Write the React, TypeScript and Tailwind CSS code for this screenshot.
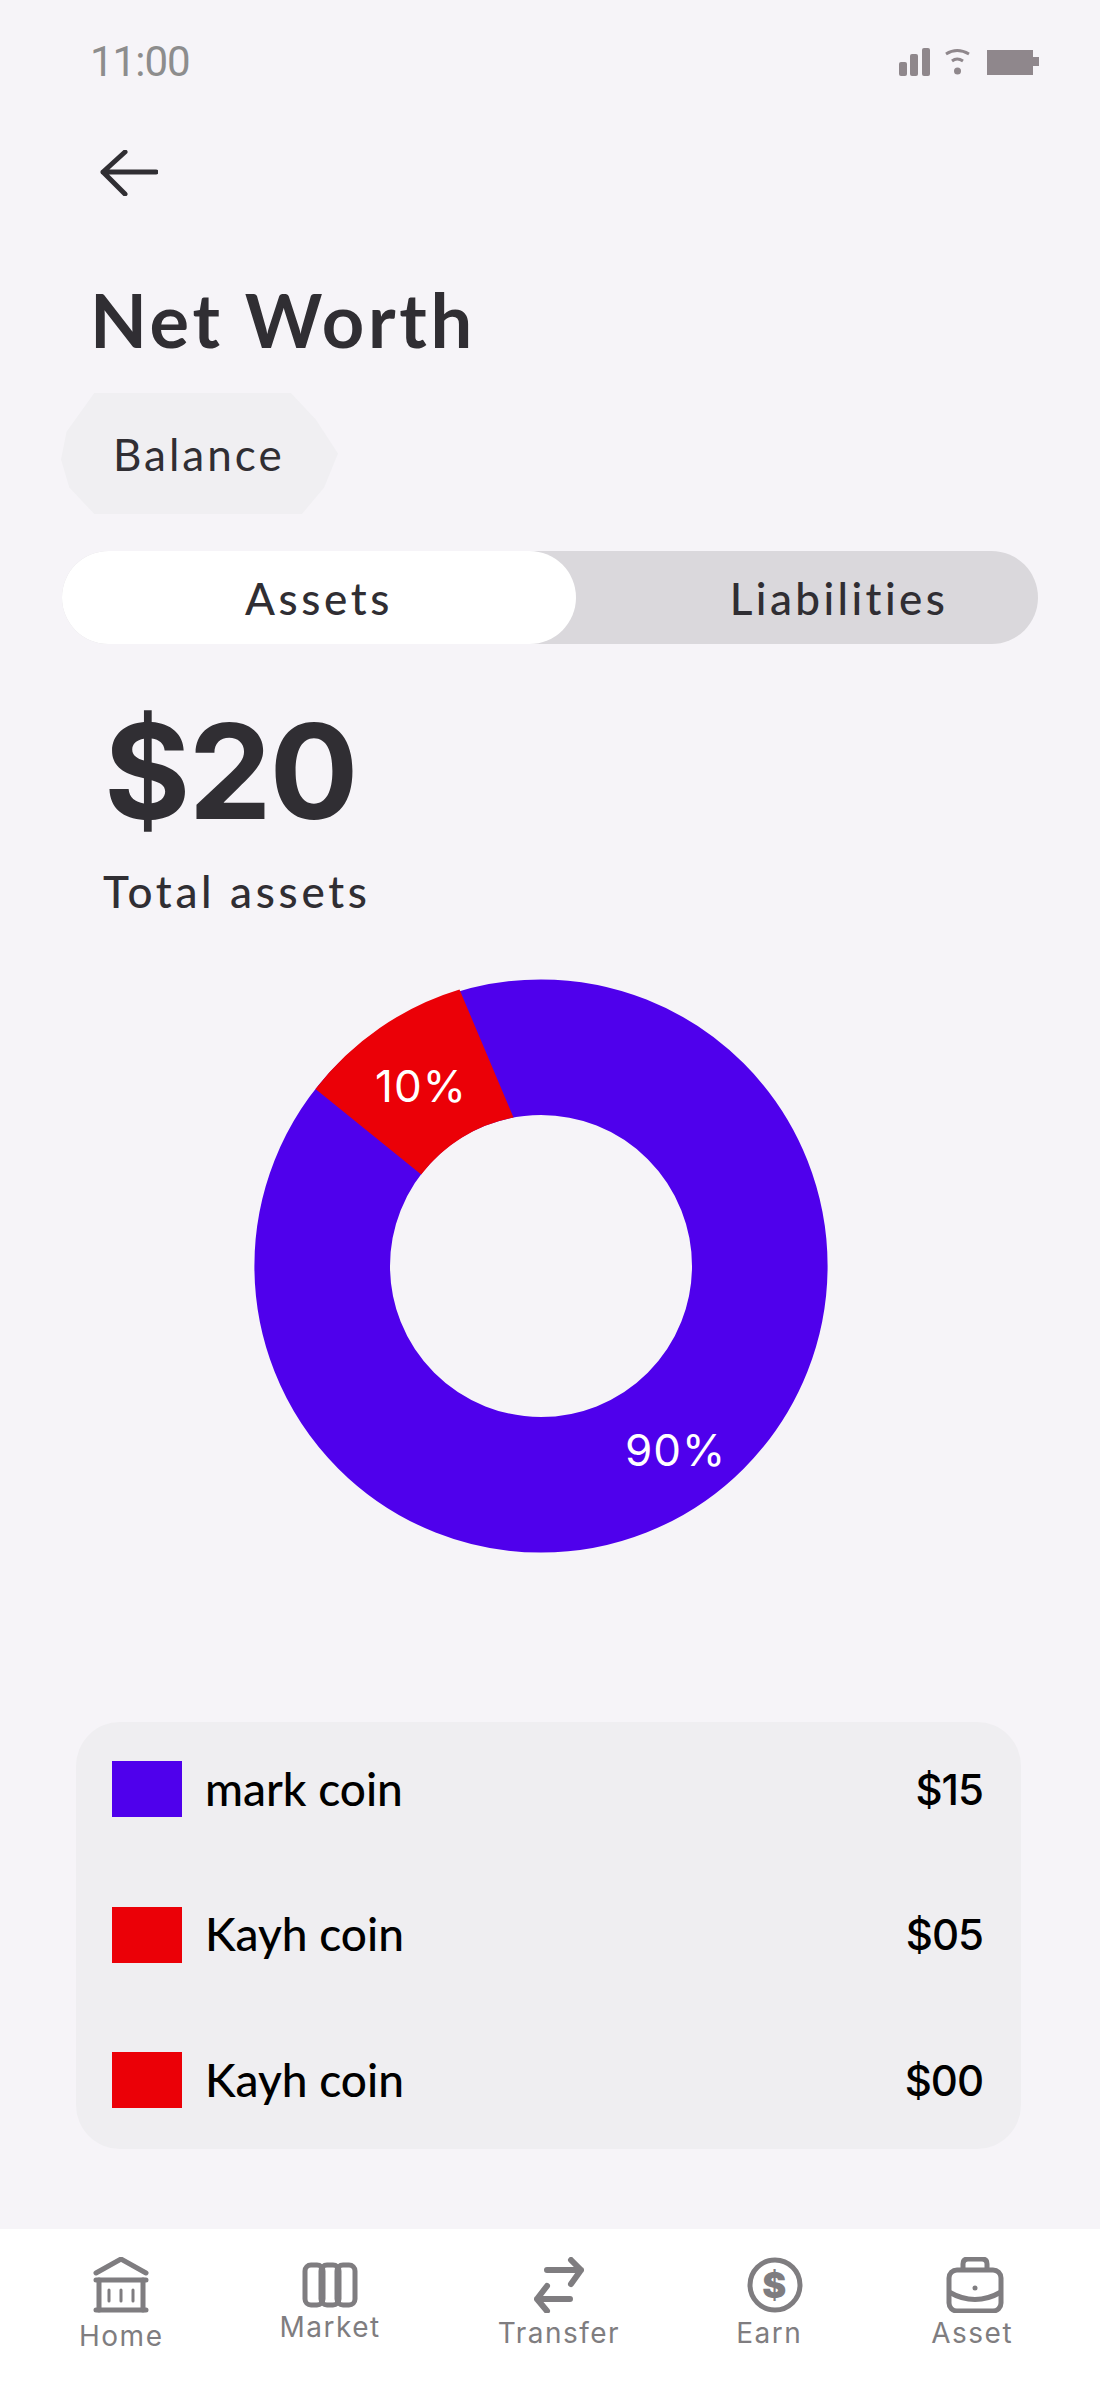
const rows = [
  { name: 'mark coin', amount: '$15', swatch: 'bg-[#4f00ec]' },
  { name: 'Kayh coin', amount: '$05', swatch: 'bg-[#eb0007]' },
  { name: 'Kayh coin', amount: '$00', swatch: 'bg-[#eb0007]' },
]

function StatusIcons() {
  return (
    <svg width="140" height="28" viewBox="0 0 140 28" fill="#8f878c">
      <rect x="0" y="14" width="8" height="14" rx="2" />
      <rect x="11" y="6" width="8" height="22" rx="2" />
      <rect x="23" y="0" width="8" height="28" rx="2" />
      <path d="M47 6 Q58 -1 70 6" fill="none" stroke="#8f878c" strokeWidth="3" />
      <path d="M53 13 Q58 9 64 13" fill="none" stroke="#8f878c" strokeWidth="3" />
      <circle cx="58.5" cy="23" r="3.5" />
      <rect x="88" y="2" width="46" height="25" />
      <rect x="134" y="9" width="6" height="9" />
    </svg>
  )
}

function Donut() {
  return (
    <svg width="586" height="586" viewBox="0 0 586 586">
      <circle cx="293" cy="293" r="218.8" fill="none" stroke="#4f00ec" strokeWidth="135.6" />
      <path d="M211.5 16.5 A286.6 286.6 0 0 0 67.5 116 L173.2 201.5 A151 151 0 0 1 265.5 144.6 Z" fill="#eb0007" />
      <text x="127" y="129" fill="#fff" fontSize="44" fontFamily="Inter, sans-serif" letterSpacing="1">10%</text>
      <text x="377" y="493" fill="#fff" fontSize="44" fontFamily="Inter, sans-serif" letterSpacing="1">90%</text>
    </svg>
  )
}

function HomeIcon() {
  return (
    <svg width="56" height="56" viewBox="0 0 56 56" fill="none" stroke="#7f7d80" strokeWidth="5" strokeLinecap="round" strokeLinejoin="round">
      <path d="M3 16 L28 2 L53 16" />
      <path d="M3 23 H53 M3 53 H53" />
      <path d="M6 23 V53 M50 23 V53" />
      <path d="M16 33 V44 M28 33 V44 M40 33 V44" strokeWidth="3" />
    </svg>
  )
}

function MarketIcon() {
  return (
    <svg width="56" height="46" viewBox="0 0 56 46" fill="none" stroke="#7f7d80" strokeWidth="5">
      <rect x="3" y="3" width="18" height="40" rx="6" />
      <rect x="19" y="3" width="18" height="40" rx="6" />
      <rect x="35" y="3" width="18" height="40" rx="6" />
    </svg>
  )
}

function TransferIcon() {
  return (
    <svg width="52" height="56" viewBox="0 0 52 56" fill="none" stroke="#7f7d80" strokeWidth="6" strokeLinecap="round" strokeLinejoin="round">
      <path d="M14 13 H48 M38 3 L48 13 L38 27" />
      <path d="M37 42 H4 M14 29 L4 42 L14 54" />
    </svg>
  )
}

function EarnIcon() {
  return (
    <svg width="56" height="56" viewBox="0 0 56 56" fill="none">
      <circle cx="28" cy="28" r="25" stroke="#7f7d80" strokeWidth="5" />
      <text x="28" y="41" textAnchor="middle" fill="#7f7d80" fontSize="36" fontWeight="900" fontFamily="Inter, sans-serif">$</text>
    </svg>
  )
}

function AssetIcon() {
  return (
    <svg width="58" height="56" viewBox="0 0 58 56" fill="none" stroke="#7f7d80" strokeWidth="5">
      <path d="M17 13 V7 Q17 2 22 2 H36 Q41 2 41 7 V13" />
      <rect x="3" y="13" width="52" height="41" rx="8" />
      <path d="M3 35 Q29 50 55 35" />
      <circle cx="29" cy="31" r="2.5" fill="#7f7d80" stroke="none" />
    </svg>
  )
}

export default function App() {
  return (
    <div className="w-[1100px] h-[2385px] bg-[#f6f4f8] flex flex-col overflow-hidden font-['Lato',sans-serif] text-[#302e33]">
      <div className="flex justify-between items-center pl-[90px] pr-[61px] pt-[40px] h-[84px]">
        <span className="text-[42px] leading-[46px] tracking-[-1px] text-[#8d8d8d] font-['Roboto',sans-serif]">11:00</span>
        <StatusIcons />
      </div>

      <div className="pl-[100px] mt-[66px] h-[46px]">
        <svg width="58" height="46" viewBox="0 0 58 46" fill="none" stroke="#302e33" strokeWidth="5" strokeLinecap="round" strokeLinejoin="round">
          <path d="M56 22 H3 M25 2 L3 22 L25 44" />
        </svg>
      </div>

      <h1 className="pl-[90px] mt-[82px] text-[74px] leading-[84px] font-bold tracking-[3.7px]">Net Worth</h1>

      <div className="ml-[61px] mt-[31px] w-[277px] h-[121px] flex items-center pl-[52px] bg-[#f0eff2] [clip-path:polygon(12%_0,83%_0,92%_22%,100%_50%,95%_78%,87%_100%,12%_100%,3%_78%,0_55%,2%_32%)]">
        <span className="text-[44px] tracking-[3px]">Balance</span>
      </div>

      <div className="ml-[62px] mt-[37px] w-[976px] h-[93px] flex rounded-full bg-[#dad8dc]">
        <div className="w-[514px] rounded-full bg-white flex items-center justify-center text-[44px] font-medium tracking-[3.6px]">Assets</div>
        <div className="flex-1 flex items-center justify-center pl-[64px] text-[44px] font-medium tracking-[3.4px]">Liabilities</div>
      </div>

      <div className="pl-[104px] mt-[47px] text-[132px] leading-[160px] font-bold font-['Inter',sans-serif] tracking-[-2px]">$20</div>
      <div className="pl-[103px] mt-[15px] text-[44px] leading-[50px] font-medium tracking-[3.7px]">Total assets</div>

      <div className="flex pl-[248px] mt-[57px]">
        <Donut />
      </div>

      <div className="ml-[76px] mt-[163px] w-[945px] h-[427px] rounded-[44px] bg-[#efeef1] flex flex-col pt-[39px] pl-[36px] pr-[38px] gap-[89.5px]">
        {rows.map((row, i) => (
          <div key={i} className="flex items-center h-[56px]">
            <div className={`w-[70px] h-[56px] ${row.swatch}`} />
            <span className="ml-[23px] -mt-[2px] text-[46px] font-medium text-black">{row.name}</span>
            <span className="ml-auto text-[42px] font-medium text-black font-['Inter',sans-serif] tracking-[-1px]">{row.amount}</span>
          </div>
        ))}
      </div>

      <div className="mt-[80px] flex-1 bg-white flex pl-[79px] text-[#7f7d80] text-[28px] tracking-[1.5px] font-['Inter',sans-serif]">
        <div className="flex flex-col items-center pt-[28px]">
          <HomeIcon />
          <span className="leading-[34px] mt-[6px]">Home</span>
        </div>
        <div className="ml-[116px] flex flex-col items-center pt-[33px]">
          <MarketIcon />
          <span className="leading-[34px] mt-[2px]">Market</span>
        </div>
        <div className="ml-[117px] flex flex-col items-center pt-[28px]">
          <TransferIcon />
          <span className="leading-[34px] mt-[3px]">Transfer</span>
        </div>
        <div className="ml-[116px] flex flex-col items-center pt-[28px]">
          <div className="translate-x-[6px]"><EarnIcon /></div>
          <span className="leading-[34px] mt-[3px]">Earn</span>
        </div>
        <div className="ml-[129px] flex flex-col items-center pt-[28px]">
          <div className="translate-x-[3px]"><AssetIcon /></div>
          <span className="leading-[34px] mt-[3px]">Asset</span>
        </div>
      </div>
    </div>
  )
}
